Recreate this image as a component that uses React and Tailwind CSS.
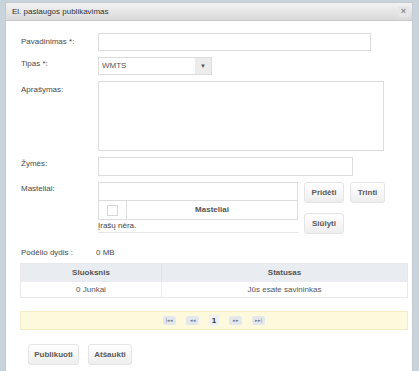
import React from 'react';

const Btn = ({ children, className = '' }) => (
  <button className={`h-[21px] rounded-[3px] border border-[#e4e4e4] bg-gradient-to-b from-[#ffffff] to-[#eeeeee] text-[8px] font-bold text-[#5a5a5a] ${className}`}>
    {children}
  </button>
);

const PagerBtn = ({ children }) => (
  <span className="flex h-[9px] w-[13px] items-center justify-center rounded-[2px] bg-[#e4e8ee] text-[5px] leading-none text-[#6a7a90]">
    {children}
  </span>
);

const Label = ({ children, className = '' }) => (
  <div className={`w-[77px] shrink-0 text-[8px] text-[#4a4a4a] ${className}`}>{children}</div>
);

export default function App() {
  return (
    <div
      className="h-[371px] w-[419px] overflow-hidden bg-[#c9d3dc] pl-[5px] pt-[2px]"
      style={{ fontFamily: '"Liberation Sans", Arial, sans-serif' }}
    >
      <div className="flex h-[372px] w-[408px] flex-col border border-[#c3cad2] bg-white">
        {/* header */}
        <div className="flex h-[18px] items-center justify-between border-b border-[#c8c8c8] bg-gradient-to-b from-[#f3f3f3] to-[#d9d9d9] pl-[6px] pr-[3px]">
          <span className="text-[8px] text-[#333]">El. paslaugos publikavimas</span>
          <span className="flex h-[11px] w-[11px] items-center justify-center rounded-[2px] bg-[#e6e6e6] text-[9px] font-bold leading-none text-[#8a8a8a]">×</span>
        </div>

        <div className="flex flex-col pl-[15px] pt-[12px]">
          {/* Pavadinimas */}
          <div className="flex items-start">
            <Label className="pt-[3px]">Pavadinimas *:</Label>
            <div className="h-[18px] w-[273px] border border-[#dcdcdc]" />
          </div>

          {/* Tipas */}
          <div className="mt-[6px] flex items-start">
            <Label className="pt-[1px]">Tipas *:</Label>
            <div className="flex h-[18px] w-[114px] border border-[#dcdcdc]">
              <span className="flex-1 pl-[3px] pt-[4px] text-[8px] leading-none text-[#555]">WMTS</span>
              <span className="flex w-[16px] items-center justify-center bg-[#ececec] text-[6px] text-[#555]">▼</span>
            </div>
          </div>

          {/* Aprašymas */}
          <div className="mt-[6px] flex items-start">
            <Label className="pt-[3px]">Aprašymas:</Label>
            <div className="h-[70px] w-[286px] border border-[#dcdcdc]" />
          </div>

          {/* Žymės */}
          <div className="mt-[6px] flex items-start">
            <Label className="pt-[1px]">Žymės:</Label>
            <div className="h-[19px] w-[255px] border border-[#dcdcdc]" />
          </div>

          {/* Masteliai */}
          <div className="mt-[6px] flex items-start">
            <Label className="pt-[1px]">Masteliai:</Label>
            <div className="flex w-[200px] flex-col">
              <div className="h-[19px] border border-[#dcdcdc]" />
              <div className="flex h-[19px] border-x border-b border-[#dcdcdc]">
                <div className="flex w-[28px] items-center justify-center border-r border-[#dcdcdc]">
                  <span className="h-[11px] w-[11px] border border-[#d6d6d6]" />
                </div>
                <div className="flex flex-1 items-center justify-center text-[8px] font-bold text-[#555]">Masteliai</div>
              </div>
              <div className="h-[13px] border-b border-[#e6e6e6] pt-[2px] text-[8px] leading-none text-[#444]">Įrašų nėra.</div>
            </div>
            <div className="ml-[6px] flex flex-col gap-[10px]">
              <div className="flex gap-[6px]">
                <Btn className="w-[40px]">Pridėti</Btn>
                <Btn className="w-[35px]">Trinti</Btn>
              </div>
              <Btn className="w-[40px]">Siūlyti</Btn>
            </div>
          </div>

          {/* Podėlio dydis */}
          <div className="mt-[13px] flex items-center text-[8px] text-[#4a4a4a]">
            <span className="w-[75px]">Podėlio dydis :</span>
            <span>0 MB</span>
          </div>

          {/* table */}
          <div className="mt-[4px] w-[388px] -ml-[1px] border border-[#e6e9ec] text-[8px]">
            <div className="flex h-[18px] bg-[#e9edf2] font-bold text-[#555]">
              <div className="flex w-[141px] items-center justify-center border-r border-[#dfe3e8]">Sluoksnis</div>
              <div className="flex flex-1 items-center justify-center">Statusas</div>
            </div>
            <div className="flex h-[15px] text-[#555]">
              <div className="flex w-[141px] items-center justify-center border-r border-[#eceff2]">0 Junkai</div>
              <div className="flex flex-1 items-center justify-center">Jūs esate savininkas</div>
            </div>
          </div>

          {/* pager */}
          <div className="mt-[13px] -ml-[1px] flex h-[19px] w-[388px] items-center justify-center gap-[10px] border border-[#f3ecc4] bg-[#fdf9dd]">
            <PagerBtn>|◂◂</PagerBtn>
            <PagerBtn>◂◂</PagerBtn>
            <span className="flex h-[11px] w-[10px] items-center justify-center rounded-[2px] bg-[#eef0f3] text-[8px] font-bold text-[#333]">1</span>
            <PagerBtn>▸▸</PagerBtn>
            <PagerBtn>▸▸|</PagerBtn>
          </div>

          {/* actions */}
          <div className="mt-[14px] ml-[7px] flex gap-[9px]">
            <Btn className="w-[51px]">Publikuoti</Btn>
            <Btn className="w-[44px]">Atšaukti</Btn>
          </div>
        </div>
      </div>
    </div>
  );
}
